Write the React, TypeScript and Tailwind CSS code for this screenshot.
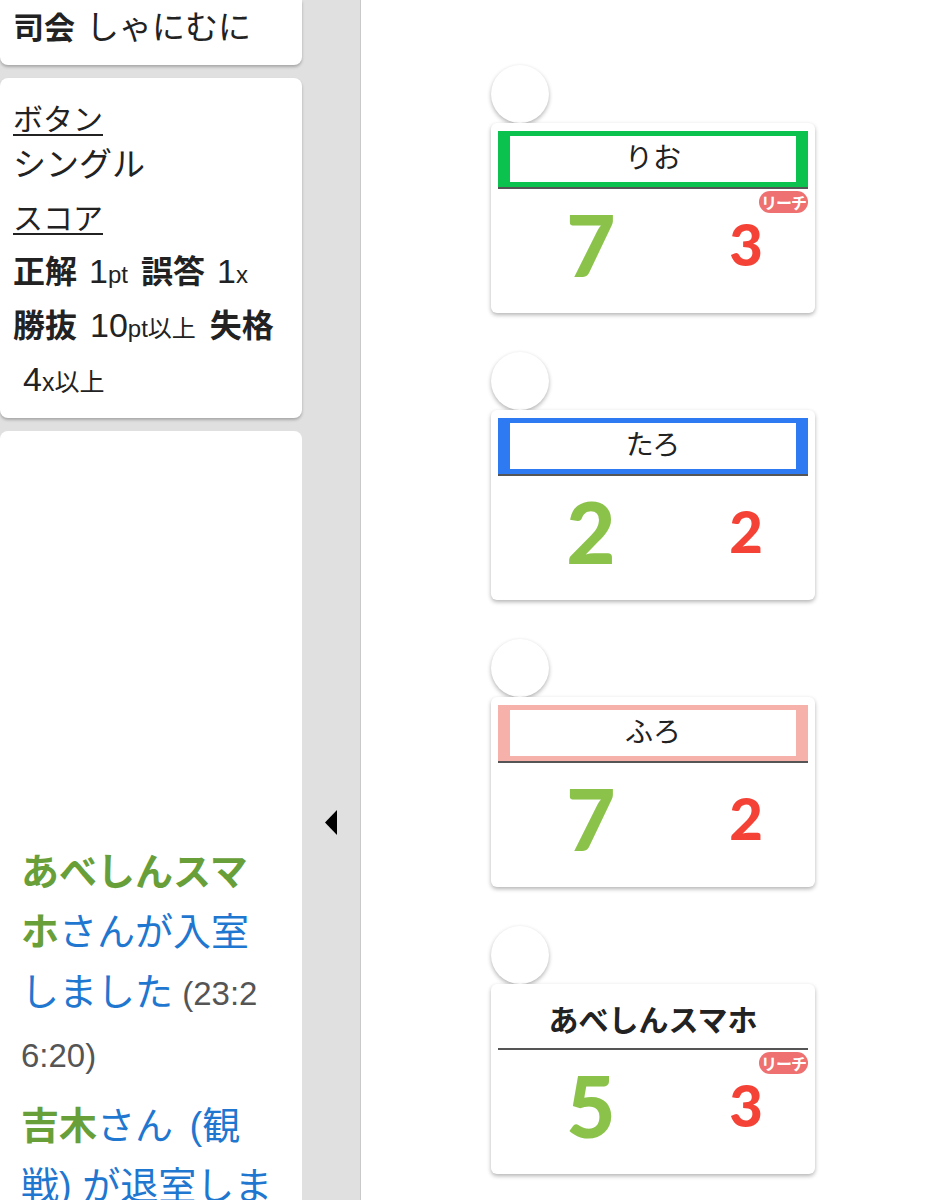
type Player = {
  name: string;
  frame: string;
  bold?: boolean;
  correct: number;
  wrong: number;
  reach?: boolean;
};

const players: Player[] = [
  { name: 'りお', frame: 'bg-[#0bc24f] px-[12px] py-[5px]', correct: 7, wrong: 3, reach: true },
  { name: 'たろ', frame: 'bg-[#2d7af3] px-[12px] py-[5px]', correct: 2, wrong: 2 },
  { name: 'ふろ', frame: 'bg-[#f6b1ab] px-[12px] py-[5px]', correct: 7, wrong: 2 },
  { name: 'あべしんスマホ', frame: '', bold: true, correct: 5, wrong: 3, reach: true },
];

function PlayerCard({ p }: { p: Player }) {
  return (
    <div className="w-[324px]">
      {/* buzzer lamp */}
      <div className="h-[58px] w-[58px] rounded-full bg-white shadow-[0_2px_4px_rgba(0,0,0,0.3)]"></div>
      <div className="rounded-md bg-white px-[7px] pt-[8px] shadow-[0_2px_4px_rgba(0,0,0,0.3)]">
        <div className={`h-[56px] ${p.frame}`}>
          <div
            className={`flex h-full items-center justify-center bg-white text-[#222] ${
              p.bold ? 'text-[30px] font-bold' : 'text-[28px]'
            }`}
          >
            {p.name}
          </div>
        </div>
        <div className="h-[2px] bg-[#555]"></div>
        <div className="relative grid h-[124px] grid-cols-[186px_124px] items-center pb-[14px] font-['Lato',sans-serif] font-black leading-none">
          <div className="text-center text-[85px] text-[#8bc34a]">{p.correct}</div>
          <div className="text-center text-[58px] text-[#f44336]">{p.wrong}</div>
          {p.reach && (
            <div className="absolute right-0 top-[2px] flex h-[22px] w-[49px] items-center justify-center rounded-full bg-[#ee7070] font-['Noto_Sans_CJK_JP',sans-serif] text-[16px] font-bold leading-none tracking-[-1px] text-white">
              リーチ
            </div>
          )}
        </div>
      </div>
    </div>
  );
}

export default function App() {
  return (
    <div className="flex h-[1200px] w-[945px] overflow-hidden bg-white font-['Liberation_Sans','Noto_Sans_CJK_JP',sans-serif] text-[#222]">
      <aside className="flex w-[361px] shrink-0 border-r border-[#c9c9c9] bg-[#e0e0e0]">
        <div className="flex w-[302px] flex-col gap-[13px]">
          <div className="h-[65px] shrink-0 rounded-b-lg bg-white pl-[13px] pt-[10px] text-[33px] leading-[36px] shadow-[0_2px_3px_rgba(0,0,0,0.25)]">
            <b className="mr-[11px] text-[31px]">司会</b>しゃにむに
          </div>

          <div className="shrink-0 rounded-lg bg-white px-[13px] pb-[12px] pt-[24px] shadow-[0_2px_3px_rgba(0,0,0,0.25)]">
            <div className="text-[30px] leading-[36px] underline decoration-[1.5px] underline-offset-[4px]">ボタン</div>
            <div className="text-[33px] leading-[54px]">シングル</div>
            <div className="mt-[9px] text-[30px] leading-[36px] underline decoration-[1.5px] underline-offset-[4px]">スコア</div>
            <div className="mt-[7px] text-[34px] leading-[54px]">
              <div className="h-[54px] whitespace-nowrap">
                <b className="mr-[12px] text-[32px]">正解</b>1<span className="mr-[13px] text-[24px]">pt</span>
                <b className="mr-[12px] text-[32px]">誤答</b>1<span className="text-[24px]">x</span>
              </div>
              <div className="h-[54px] whitespace-nowrap">
                <b className="mr-[13px] text-[32px]">勝抜</b>10<span className="mr-[14px] text-[24px]">pt以上</span>
                <b className="text-[32px]">失格</b>
              </div>
              <div className="h-[54px] pl-[10px]">
                4<span className="text-[25px]">x以上</span>
              </div>
            </div>
          </div>

          {/* chat log */}
          <div className="flex-1 rounded-t-lg bg-white pl-[21px] pr-[28px] pt-[411px] text-[38px] leading-[60px] break-all">
            <p>
              <span className="font-bold text-[#689f38]">あべしんスマホ</span>
              <span className="text-[#1f77d0]">さんが入室しました</span>
              <span className="text-[33px] text-[#555]"> (23:26:20)</span>
            </p>
            <p className="mt-[10px]">
              <span className="font-bold text-[#689f38]">吉木</span>
              <span className="text-[#1f77d0]">さん </span>
              <span className="ml-[6px] text-[#1f77d0]">(観戦) が退室しました</span>
            </p>
          </div>
        </div>

        <div className="flex flex-1 justify-center pt-[810px]">
          <svg width="12" height="25" viewBox="0 0 12 25">
            <path d="M12 0 L0 12.5 L12 25 Z" fill="#000" />
          </svg>
        </div>
      </aside>

      <main className="flex flex-1 flex-col items-center gap-[39px] pt-[65px]">
        {players.map((p) => (
          <PlayerCard key={p.name} p={p} />
        ))}
      </main>
    </div>
  );
}
